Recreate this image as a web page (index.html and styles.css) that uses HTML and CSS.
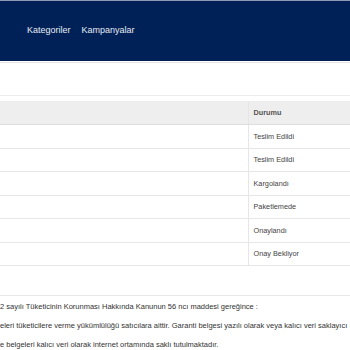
FILE: index.html
```html
<!DOCTYPE html>
<html lang="tr">

<head>
    <meta charset="UTF-8">
    <title>Siparişlerim</title>
    <link rel="stylesheet" href="styles.css">
</head>

<body>
    <header class="header">
        <nav class="menu">
            <a href="#">Kategoriler</a>
            <a href="#">Kampanyalar</a>
        </nav>
    </header>

    <div class="subbar"></div>

    <table class="orders">
        <thead>
            <tr>
                <th class="col-main"></th>
                <th>Durumu</th>
            </tr>
        </thead>
        <tbody>
            <tr><td class="col-main"></td><td>Teslim Edildi</td></tr>
            <tr><td class="col-main"></td><td>Teslim Edildi</td></tr>
            <tr><td class="col-main"></td><td>Kargolandı</td></tr>
            <tr><td class="col-main"></td><td>Paketlemede</td></tr>
            <tr><td class="col-main"></td><td>Onaylandı</td></tr>
            <tr><td class="col-main"></td><td>Onay Bekliyor</td></tr>
        </tbody>
    </table>

    <div class="note">
        <p>2 sayılı Tüketicinin Korunması Hakkında Kanunun 56 ncı maddesi gereğince :</p>
        <p>eleri tüketicilere verme yükümlülüğü satıcılara aittir. Garanti belgesi yazılı olarak veya kalıcı veri saklayıcı</p>
        <p>e belgeleri kalıcı veri olarak internet ortamında saklı tutulmaktadır.</p>
    </div>
</body>

</html>
```

FILE: styles.css
```css
* {
    margin: 0;
    padding: 0;
    box-sizing: border-box;
}

body {
    font-family: "Liberation Sans", Arial, sans-serif;
    background: #fff;
    color: #333;
    overflow: hidden;
}

.header {
    height: 61px;
    background: #002157;
    border-top: 1px solid #8e9bb2;
    display: flex;
    align-items: center;
    padding: 0 0 2px 27px;
}

.menu {
    display: flex;
    gap: 11px;
}

.menu a {
    color: #e6ebf3;
    font-size: 9px;
    text-decoration: none;
}

.subbar {
    height: 34px;
    margin-top: 1px;
    border-top: 1px solid #e6e6e6;
    border-bottom: 1px solid #ececec;
    margin-bottom: 5px;
}

.orders {
    width: 100%;
    border-collapse: collapse;
    font-size: 7.3px;
}

.orders th,
.orders td {
    height: 23.5px;
    padding: 0 5px;
    text-align: left;
    vertical-align: middle;
    border-bottom: 1px solid #e6e6e6;
    color: #444;
}

.orders th {
    background: #eeeeee;
    font-weight: bold;
    color: #555;
    border-bottom-color: #dedede;
}

.orders .col-main {
    width: 248px;
    border-right: 1px solid #e6e6e6;
}

.note {
    margin-top: 29px;
    border-top: 1px solid #e8e8e8;
    padding-top: 1px;
    font-size: 7.5px;
    line-height: 19px;
    color: #333;
    white-space: nowrap;
    overflow: hidden;
}
```
